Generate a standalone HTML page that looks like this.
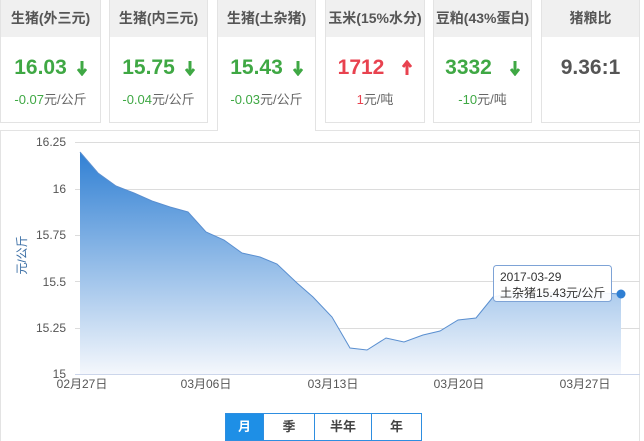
<!DOCTYPE html>
<html><head><meta charset="utf-8"><style>
body{margin:0;width:644px;height:441px;background:#fff;overflow:hidden;font-family:"Liberation Sans","Noto Sans CJK SC",sans-serif;position:relative}
.card{position:absolute;top:0;height:123px;border:1px solid #e3e3e3;border-top:none;box-sizing:border-box;text-align:center;background:#fff}
.card .h{height:37px;background:#f0f0f0;line-height:37px;font-size:14px;font-weight:bold;color:#555}
.card .v{margin-top:18px;font-size:21px;font-weight:bold;height:26px;line-height:26px}
.card .s{margin-top:8px;font-size:13px}
.g{color:#3fa844}.r{color:#e8424f}
.gs{color:#3fa844}.gs span{color:#666}
.ar{display:inline-block;margin-left:10px;vertical-align:-2px}
.panel{position:absolute;left:0;top:130px;width:640px;height:311px;border:1px solid #e3e3e3;box-sizing:border-box;border-bottom:none}
.btns{position:absolute;top:413px;left:225px;height:28px;display:flex;border:1px solid #2e8ee0;box-sizing:border-box;font-size:13px;font-weight:bold;color:#444}
.btns div{line-height:26px;text-align:center;border-left:1px solid #2e8ee0}
.btns div:first-child{border-left:none;background:#1e8fe6;color:#fff}
</style></head><body>
<div class="card" style="left:0;width:101px"><div class="h">生猪(外三元)</div><div class="v g">16.03<svg class="ar" width="10" height="16"><path d="M5,1V14M1,9L5,14L9,9" stroke="#3fa844" stroke-width="3" fill="none"/></svg></div><div class="s gs">-0.07<span>元/公斤</span></div></div>
<div class="card" style="left:109px;width:99px"><div class="h">生猪(内三元)</div><div class="v g">15.75<svg class="ar" width="10" height="16"><path d="M5,1V14M1,9L5,14L9,9" stroke="#3fa844" stroke-width="3" fill="none"/></svg></div><div class="s gs">-0.04<span>元/公斤</span></div></div>
<div class="card" style="left:217px;width:99px;height:131px;border-bottom:none;z-index:2"><div class="h">生猪(土杂猪)</div><div class="v g">15.43<svg class="ar" width="10" height="16"><path d="M5,1V14M1,9L5,14L9,9" stroke="#3fa844" stroke-width="3" fill="none"/></svg></div><div class="s gs">-0.03<span>元/公斤</span></div></div>
<div class="card" style="left:325px;width:100px"><div class="h">玉米(15%水分)</div><div class="v r">1712<svg class="ar" style="margin-left:18px" width="10" height="16"><path d="M5,15V2M1,7L5,2L9,7" stroke="#e8424f" stroke-width="3" fill="none"/></svg></div><div class="s" style="color:#e8424f">1<span style="color:#666">元/吨</span></div></div>
<div class="card" style="left:433px;width:99px"><div class="h">豆粕(43%蛋白)</div><div class="v g">3332<svg class="ar" style="margin-left:18px" width="10" height="16"><path d="M5,1V14M1,9L5,14L9,9" stroke="#3fa844" stroke-width="3" fill="none"/></svg></div><div class="s gs">-10<span>元/吨</span></div></div>
<div class="card" style="left:541px;width:99px"><div class="h">猪粮比</div><div class="v" style="color:#555">9.36:1</div></div>
<div class="panel"></div>
<svg style="position:absolute;left:0;top:0" width="644" height="441">
<defs><linearGradient id="gr" gradientUnits="userSpaceOnUse" x1="0" y1="150" x2="0" y2="374"><stop offset="0" stop-color="#2f7fd3"/><stop offset="1" stop-color="#f4f7fc"/></linearGradient></defs>
<g stroke="#dcdcdc" stroke-width="1">
<line x1="75" y1="142.5" x2="640" y2="142.5"/><line x1="75" y1="189.5" x2="640" y2="189.5"/><line x1="75" y1="235.5" x2="640" y2="235.5"/><line x1="75" y1="281.5" x2="640" y2="281.5"/><line x1="75" y1="328.5" x2="640" y2="328.5"/>
</g>
<path d="M80,152 L98,173 L116,186 L134,193 L152,201 L170,207 L188,212 L206,232 L224,240 L242,253 L260,257 L277,264 L297,283 L313,297 L332,317 L350,348 L367,350 L386,338 L404,342 L423,335 L440,331 L458,320 L476,318 L493,297 L512,293 L530,296 L548,292 L566,294 L584,291 L602,293 L621,294 L621,374 L80,374 Z" fill="url(#gr)"/>
<path d="M80,152 L98,173 L116,186 L134,193 L152,201 L170,207 L188,212 L206,232 L224,240 L242,253 L260,257 L277,264 L297,283 L313,297 L332,317 L350,348 L367,350 L386,338 L404,342 L423,335 L440,331 L458,320 L476,318 L493,297 L512,293 L530,296 L548,292 L566,294 L584,291 L602,293 L621,294" fill="none" stroke="#5a8fd0" stroke-width="1"/>
<line x1="75" y1="374.5" x2="640" y2="374.5" stroke="#ccd6eb"/>
<g font-size="12" fill="#555" text-anchor="end" font-family="Liberation Sans,sans-serif">
<text x="66" y="146">16.25</text><text x="66" y="193">16</text><text x="66" y="239">15.75</text><text x="66" y="286">15.5</text><text x="66" y="332">15.25</text><text x="66" y="378">15</text>
</g>
<g font-size="12" fill="#555" text-anchor="middle" font-family="Liberation Sans,Noto Sans CJK SC,sans-serif">
<text x="82" y="388">02月27日</text><text x="206" y="388">03月06日</text><text x="333" y="388">03月13日</text><text x="459" y="388">03月20日</text><text x="585" y="388">03月27日</text>
</g>
<text transform="translate(26,255) rotate(-90)" font-size="12" fill="#3a6ea5" text-anchor="middle" font-family="Liberation Sans,Noto Sans CJK SC,sans-serif">元/公斤</text>
<rect x="493.5" y="265.5" width="118" height="36" rx="3" fill="#fff" fill-opacity="0.92" stroke="#7ea3d6"/>
<text x="500" y="281" font-size="12" fill="#333" font-family="Liberation Sans,sans-serif">2017-03-29</text>
<text x="500" y="297" font-size="12" fill="#333" font-family="Liberation Sans,Noto Sans CJK SC,sans-serif">土杂猪15.43元/公斤</text>
<circle cx="621" cy="294" r="4.5" fill="#2f7fd3"/>
</svg>
<div class="btns"><div style="width:37px">月</div><div style="width:50px">季</div><div style="width:56px">半年</div><div style="width:49px">年</div></div>
</body></html>
